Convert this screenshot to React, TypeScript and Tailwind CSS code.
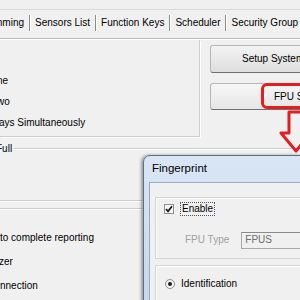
import React from 'react';

function Sep() {
  return <span className="ml-[5px] mr-[4px] h-[16px] w-[2px] shrink-0 border-l border-r border-l-[#8c8c8c] border-r-white" />;
}

function Etched({ className = '' }: { className?: string }) {
  return <div className={`h-[2px] border-t border-t-[#cdcdcd] border-b border-b-white ${className}`} />;
}

export default function App() {
  return (
    <div className="relative w-[300px] h-[300px] overflow-hidden bg-[#f0f0f0] text-[10px] leading-none text-black font-['Liberation_Sans',Arial,sans-serif]">
      {/* strip above tabs */}
      <div className="h-[10px] border-b border-[#dadada]" />

      {/* tab captions */}
      <div className="h-[28px] flex items-center whitespace-nowrap pb-[2px]">
        <span className="ml-[-36px]">Programming</span>
        <Sep />
        <span>Sensors List</span>
        <Sep />
        <span>Function Keys</span>
        <Sep />
        <span>Scheduler</span>
        <Sep />
        <span>Security Group</span>
      </div>
      <div className="h-[1px] bg-[#b9b9b9]" />
      <div className="h-[1px] bg-white" />

      {/* upper area */}
      <div className="flex">
        <div className="w-[200px] h-[97px] shrink-0 pt-[30px] border-r border-b border-[#cdcdcd] shadow-[1px_1px_0_#fff] whitespace-nowrap">
          <div className="h-[21px] flex items-center"><span className="ml-[-3px]">ne</span></div>
          <div className="h-[21px] flex items-center"><span className="ml-[-3px]">wo</span></div>
          <div className="h-[21px] flex items-center"><span className="ml-[-1px]">ays Simultaneously</span></div>
        </div>
        <div className="pl-[10px] pt-[5px] flex flex-col gap-[10px] whitespace-nowrap">
          <button className="w-[130px] h-[28px] flex items-center pl-[31px] rounded-[3px] border border-[#b5b5b5] border-b-[#6f6f6f] bg-gradient-to-b from-[#f3f3f3] to-[#dedede]">
            Setup System
          </button>
          <button className="w-[130px] h-[27px] flex items-center pl-[63px] rounded-[3px] border border-[#b5b5b5] border-b-[#6f6f6f] bg-gradient-to-b from-[#f6f6f6] to-[#e6e6e6]">
            FPU Setup
          </button>
        </div>
      </div>

      {/* "Full" group */}
      <div className="mt-[6px] h-[12px] flex items-center whitespace-nowrap">
        <span className="ml-[-4px] mr-[2px]">Full</span>
        <Etched className="flex-1 mt-[-1px]" />
      </div>
      <div className="h-[45px]" />
      <Etched />
      <div className="h-[6px]" />
      <Etched />

      {/* lower group */}
      <div className="pt-[16px] whitespace-nowrap">
        <div className="h-[24px] flex items-center">to complete reporting</div>
        <div className="h-[24px] flex items-center"><span className="ml-[-1px]">zer</span></div>
        <div className="h-[24px] flex items-center">nnection</div>
      </div>

      {/* annotation */}
      <div className="absolute left-[261px] top-[83px] w-[80px] h-[26px] rounded-[6px] border-[3px] border-[#e41e20]" />
      <svg className="absolute left-[278px] top-[109px]" width="40" height="48" viewBox="0 0 40 48">
        <path d="M11 3 H25 V24 H33 L18 42 L3 24 H11 Z" fill="none" stroke="#e41e20" strokeWidth="3" strokeLinejoin="round" />
      </svg>

      {/* Fingerprint dialog */}
      <div className="absolute left-[143px] top-[155px] w-[175px] h-[160px] rounded-tl-[7px] border border-[#5d6d82] bg-gradient-to-b from-[#d9e6f5] via-[#cddff2] to-[#c3d6ec] shadow-[-2px_0_3px_rgba(0,0,0,0.35)]">
        <div className="h-[26px] flex items-center pl-[8px] text-[11.5px] text-black">Fingerprint</div>
        <div className="ml-[5px] h-[140px] border border-[#98aac1] bg-[#f0f0f0]">
          {/* enable group */}
          <div className="ml-[5px] mt-[14px] h-[62px] border-l border-t border-b border-[#d5d5d5] shadow-[inset_1px_1px_0_#fff]">
            <div className="h-[10px] mt-[6px] flex items-center pl-[8px]">
              <span className="w-[10px] h-[10px] border border-[#8e8f8f] bg-gradient-to-br from-[#f4f4f4] to-white flex items-center justify-center">
                <svg width="8" height="8" viewBox="0 0 8 8">
                  <path d="M1 4 L3 6.3 L7 1.2" fill="none" stroke="#1c1c1c" strokeWidth="1.8" />
                </svg>
              </span>
              <span className="ml-[6px] px-[1px] py-[1px] border border-dotted border-[#555]">Enable</span>
            </div>
            <div className="mt-[17px] h-[18px] flex items-center pl-[29px] whitespace-nowrap">
              <span className="text-[#a0a0a0]">FPU Type</span>
              <div className="ml-[12px] w-[80px] h-[17px] flex items-center pl-[3px] border border-[#a8a8a8] border-t-[#8a8a8a] bg-[#f0f0f0] text-[#6d6d6d]">
                FPUS
              </div>
            </div>
          </div>
          {/* mode group */}
          <div className="ml-[5px] mt-[6px] h-[40px] border-l border-t border-[#d5d5d5] shadow-[inset_1px_1px_0_#fff]">
            <div className="mt-[13px] h-[10px] flex items-center pl-[9px]">
              <span className="w-[10px] h-[10px] rounded-full border border-[#8e8f8f] bg-gradient-to-br from-[#e8e8e8] to-white flex items-center justify-center">
                <span className="w-[4px] h-[4px] rounded-full bg-[#1a1a1a]" />
              </span>
              <span className="ml-[6px]">Identification</span>
            </div>
          </div>
        </div>
      </div>
    </div>
  );
}
